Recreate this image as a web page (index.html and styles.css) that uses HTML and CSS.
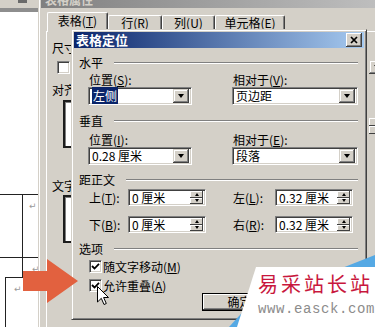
FILE: index.html
```html
<!DOCTYPE html>
<html lang="zh-CN">
<head>
    <meta charset="UTF-8">
    <title>表格定位</title>
    <link rel="stylesheet" href="styles.css">
</head>
<body>
<div class="screen">

    <!-- Word document behind the dialogs -->
    <div class="doc">
        <div class="doc-toolbar"><span class="doc-tool"></span></div>
        <div class="doc-ruler"></div>
        <div class="doc-table">
            <div class="doc-row row-a"><div class="doc-cell first"></div><div class="doc-cell"><span class="ret">↵</span></div></div>
            <div class="doc-row row-b"><div class="doc-cell first"></div><div class="doc-cell"><span class="ret">↵</span></div></div>
            <div class="doc-row row-c"><div class="doc-cell"><span class="ret">↵</span></div></div>
        </div>
    </div>

    <!-- 表格属性 (inactive) -->
    <div class="win props">
        <div class="props-title">表格属性</div>
        <div class="tabs">
            <div class="tab active">表格(<u>T</u>)</div>
            <div class="tab t-row">行(<u>R</u>)</div>
            <div class="tab t-col">列(<u>U</u>)</div>
            <div class="tab t-cell">单元格(<u>E</u>)</div>
        </div>
        <div class="tab-panel">
            <div class="panel-main">
                <div class="panel-label size">尺寸</div>
                <span class="check small-check"></span>
                <div class="panel-label">对齐</div>
                <div class="panel-box"></div>
                <div class="panel-label wrap">文字</div>
                <div class="panel-box second"></div>
            </div>
            <div class="panel-side">
                <span class="side-drop"><i class="tri-down"></i></span>
                <span class="side-spin"><i class="spin-up"></i><i class="spin-down"></i></span>
            </div>
        </div>
    </div>

    <!-- 表格定位 -->
    <div class="win locate">
        <div class="titlebar">
            <span class="title-text">表格定位</span>
            <span class="close-btn">
                <svg width="8" height="8" viewBox="0 0 8 8"><path d="M1 1L7 7M7 1L1 7" stroke="#000" stroke-width="1.7" fill="none"/></svg>
            </span>
        </div>
        <div class="dlg-body">
            <div class="group-head top"><span>水平</span><i class="etch"></i></div>
            <div class="field-grid">
                <label class="field-label">位置(<u>S</u>):</label>
                <label class="field-label">相对于(<u>V</u>):</label>
                <div class="combo"><span class="combo-text"><span class="hilite">左侧</span></span><span class="drop-btn"><i class="tri-down"></i></span></div>
                <div class="combo"><span class="combo-text">页边距</span><span class="drop-btn"><i class="tri-down"></i></span></div>
            </div>

            <div class="group-head"><span>垂直</span><i class="etch"></i></div>
            <div class="field-grid lower">
                <label class="field-label">位置(<u>I</u>):</label>
                <label class="field-label">相对于(<u>E</u>):</label>
                <div class="combo"><span class="combo-text">0.28 厘米</span><span class="drop-btn"><i class="tri-down"></i></span></div>
                <div class="combo"><span class="combo-text">段落</span><span class="drop-btn"><i class="tri-down"></i></span></div>
            </div>

            <div class="group-head dist"><span>距正文</span><i class="etch"></i></div>
            <div class="spin-row">
                <div class="spin-cell">
                    <label class="spin-label">上(<u>T</u>):</label>
                    <div class="spin-field"><span class="spin-text">0 厘米</span><span class="spin-btns"><i class="spin-up"></i><i class="spin-down"></i></span></div>
                </div>
                <div class="spin-cell">
                    <label class="spin-label wide">左(<u>L</u>):</label>
                    <div class="spin-field"><span class="spin-text">0.32 厘米</span><span class="spin-btns"><i class="spin-up"></i><i class="spin-down"></i></span></div>
                </div>
            </div>
            <div class="spin-row second">
                <div class="spin-cell">
                    <label class="spin-label">下(<u>B</u>):</label>
                    <div class="spin-field"><span class="spin-text">0 厘米</span><span class="spin-btns"><i class="spin-up"></i><i class="spin-down"></i></span></div>
                </div>
                <div class="spin-cell">
                    <label class="spin-label wide">右(<u>R</u>):</label>
                    <div class="spin-field"><span class="spin-text">0.32 厘米</span><span class="spin-btns"><i class="spin-up"></i><i class="spin-down"></i></span></div>
                </div>
            </div>

            <div class="group-head"><span>选项</span><i class="etch"></i></div>
            <div class="check-row">
                <span class="check"><svg width="9" height="9" viewBox="0 0 9 9"><path d="M1 4L3.5 6.5L8 1.8" stroke="#000" stroke-width="1.8" fill="none"/></svg></span>
                <span>随文字移动(<u>M</u>)</span>
            </div>
            <div class="check-row second">
                <span class="check"><svg width="9" height="9" viewBox="0 0 9 9"><path d="M1 4L3.5 6.5L8 1.8" stroke="#000" stroke-width="1.8" fill="none"/></svg></span>
                <span>允许重叠(<u>A</u>)</span>
            </div>

            <div class="btn-row">
                <button class="btn default">确定</button>
                <button class="btn"></button>
            </div>
        </div>
    </div>

    <!-- orange pointer arrow -->
    <svg class="pointer" width="62" height="50" viewBox="0 0 62 50">
        <polygon points="3,15 27,15 27,3 58,25 27,47 27,35 3,35" fill="#e2613f"/>
    </svg>

    <!-- mouse cursor -->
    <svg class="cursor" width="13" height="20" viewBox="0 0 13 20">
        <path d="M0.5 0.5V16L4.3 12.3L7 18.5L9.3 17.5L6.6 11.5H11.5Z" fill="#fff" stroke="#000" stroke-width="1"/>
    </svg>

    <!-- site watermark -->
    <div class="watermark">
        <svg class="wm-shape" width="175" height="79" viewBox="0 0 175 79">
            <polygon points="142,20 175,7 175,20" fill="#55a9e4"/>
            <polygon points="29,79 50,56 50,79" fill="#55a9e4"/>
            <polygon points="56,19 175,19 175,79 37,79" fill="#fff"/>
        </svg>
        <div class="wm-text">
            <div class="wm-name">易采站长站</div>
            <div class="wm-url">www.easck.com</div>
        </div>
    </div>

</div>
</body>
</html>
```

FILE: styles.css
```css
* {
    box-sizing: border-box;
    margin: 0;
    padding: 0;
}

body {
    font-family: "Noto Sans CJK SC", "Liberation Sans", sans-serif;
    font-size: 12px;
    color: #000;
    background-color: #d4d0c8;
    overflow: hidden;
}

u {
    text-decoration: underline;
}

.screen {
    position: relative;
    width: 375px;
    height: 327px;
    overflow: hidden;
    background-color: #d4d0c8;
}

/* Word document */
.doc {
    width: 38px;
    height: 327px;
    background-color: #fff;
}

.doc-toolbar {
    height: 8px;
    padding-left: 18px;
    background-color: #d4d0c8;
}

.doc-tool {
    display: block;
    width: 9px;
    height: 3px;
    background-color: #6a6a6a;
}

.doc-ruler {
    height: 4px;
    background-color: #8e8e8e;
}

.doc-table {
    margin-top: 182px;
}

.doc-row {
    display: flex;
    border-top: 1px solid #222;
}

.row-a {
    height: 63px;
}

.row-b {
    height: 20px;
}

.row-c {
    height: 60px;
    margin-left: 5px;
    border-left: 1px solid #222;
}

.doc-cell.first {
    flex: none;
    width: 23px;
    border-right: 1px solid #222;
}

.ret {
    display: block;
    padding: 7px 0 0 6px;
    color: #9a9a9a;
    font-family: "DejaVu Sans", sans-serif;
    font-size: 9px;
    line-height: 9px;
}

.row-b .ret {
    padding-left: 9px;
}

.row-c .ret {
    padding-left: 8px;
}

/* classic window frame */
.win {
    position: absolute;
    padding: 2px;
    background-color: #d4d0c8;
    border: 1px solid;
    border-color: #d4d0c8 #404040 #404040 #d4d0c8;
    box-shadow: inset 1px 1px #fff, inset -1px -1px #808080;
}

/* 表格属性 */
.props {
    left: 38px;
    top: -12px;
    width: 352px;
    height: 345px;
}

.props-title {
    height: 17px;
    padding-left: 4px;
    line-height: 17px;
    font-weight: bold;
    color: #d4d0c8;
    background: linear-gradient(to right, #808080, #c0c0c0);
}

.tabs {
    display: flex;
    align-items: flex-end;
    height: 19px;
    margin-top: 4px;
    padding-left: 6px;
}

.tab {
    height: 16px;
    line-height: 14px;
    text-align: center;
    border: 1px solid;
    border-bottom: none;
    border-color: #fff #404040 #fff #fff;
    border-radius: 2px 2px 0 0;
    box-shadow: inset -1px 0 #808080;
}

.tab.active {
    position: relative;
    z-index: 1;
    width: 61px;
    height: 20px;
    margin-bottom: -1px;
    line-height: 16px;
    background-color: #d4d0c8;
}

.t-row {
    width: 54px;
}

.t-col {
    width: 53px;
}

.t-cell {
    width: 70px;
}

.tab-panel {
    display: flex;
    width: 340px;
    height: 300px;
    margin-left: 5px;
    border: 1px solid;
    border-color: #fff #404040 #404040 #fff;
}

/* only the strip left of the inner dialog is ever seen */
.panel-main {
    width: 25px;
    overflow: hidden;
    padding: 9px 0 0 5px;
}

.panel-label {
    width: 40px;
    line-height: 13px;
    white-space: nowrap;
}

.small-check {
    margin: 7px 0 0 5px;
}

.small-check + .panel-label {
    margin-top: 9px;
}

.panel-box {
    width: 40px;
    height: 48px;
    margin: 4px 0 0 11px;
    background-color: #fff;
    border: 2px solid #1c1c1c;
    box-shadow: inset 1px 1px #808080;
}

.panel-label.wrap {
    margin-top: 31px;
}

.panel-box.second {
    margin-top: 3px;
}

.panel-side {
    display: flex;
    flex-direction: column;
    width: 16px;
    margin-left: auto;
    padding-top: 28px;
}

.side-drop {
    display: flex;
    align-items: center;
    justify-content: center;
    height: 14px;
    box-shadow: inset -1px -1px #404040, inset 1px 1px #d4d0c8, inset -2px -2px #808080, inset 2px 2px #fff;
}

.side-spin {
    display: flex;
    flex-direction: column;
    height: 16px;
    margin-top: 44px;
}

/* 表格定位 */
.locate {
    left: 71px;
    top: 29px;
    width: 296px;
    height: 291px;
    z-index: 2;
}

.titlebar {
    display: flex;
    align-items: center;
    justify-content: space-between;
    height: 16px;
    padding: 0 2px;
    background: linear-gradient(to right, #0a246a, #a6caf0);
}

.title-text {
    color: #fff;
    font-size: 13px;
    font-weight: bold;
    line-height: 16px;
}

.close-btn {
    display: flex;
    align-items: center;
    justify-content: center;
    width: 16px;
    height: 14px;
    background-color: #d4d0c8;
    box-shadow: inset -1px -1px #404040, inset 1px 1px #fff, inset -2px -2px #808080;
}

.dlg-body {
    padding: 8px 6px 0 5px;
}

.group-head {
    display: flex;
    align-items: center;
    height: 14px;
    margin-top: 9px;
    line-height: 14px;
}

.group-head.top {
    margin-top: 0;
}

.group-head.dist {
    margin-top: 8px;
}

.etch {
    flex: 1;
    height: 2px;
    margin-left: 11px;
    border-top: 1px solid #808080;
    border-bottom: 1px solid #fff;
}

.field-grid {
    display: grid;
    grid-template-columns: 104px 126px;
    grid-template-rows: 13px 18px;
    column-gap: 40px;
    row-gap: 1px;
    margin: 3px 0 0 9px;
}

.field-grid.lower {
    margin-top: 5px;
}

.field-label {
    padding-left: 1px;
    line-height: 13px;
}

.combo,
.spin-field {
    display: flex;
    align-items: center;
    padding: 2px;
    background-color: #fff;
    border: 1px solid;
    border-color: #808080 #fff #fff #808080;
    box-shadow: inset 1px 1px #404040, inset -1px -1px #d4d0c8;
}

.combo {
    height: 18px;
}

.combo-text {
    flex: 1;
    padding-left: 1px;
    line-height: 14px;
    white-space: nowrap;
}

.hilite {
    padding: 0 1px;
    color: #fff;
    background-color: #0a246a;
}

.drop-btn {
    display: flex;
    align-items: center;
    justify-content: center;
    width: 16px;
    height: 14px;
    background-color: #d4d0c8;
    box-shadow: inset -1px -1px #404040, inset 1px 1px #d4d0c8, inset -2px -2px #808080, inset 2px 2px #fff;
}

.tri-down {
    width: 0;
    height: 0;
    border-style: solid;
    border-width: 4px 3.5px 0;
    border-color: #000 transparent transparent;
}

.spin-row {
    display: flex;
    height: 17px;
    margin: 2px 0 0 9px;
}

.spin-row.second {
    margin-top: 10px;
}

.spin-cell {
    display: flex;
    align-items: center;
}

.spin-cell:first-child {
    width: 144px;
}

.spin-label {
    width: 40px;
    padding-left: 1px;
    line-height: 13px;
}

.spin-label.wide {
    width: 43px;
}

.spin-field {
    width: 78px;
    height: 17px;
}

.spin-text {
    flex: 1;
    padding-left: 1px;
    line-height: 13px;
    white-space: nowrap;
}

.spin-btns {
    display: flex;
    flex-direction: column;
    width: 13px;
    height: 13px;
}

.spin-up,
.spin-down {
    display: flex;
    flex: 1;
    align-items: center;
    justify-content: center;
    background-color: #d4d0c8;
    box-shadow: inset -1px -1px #404040, inset 1px 1px #fff;
}

.spin-up::after,
.spin-down::after {
    content: "";
    width: 0;
    height: 0;
    border-style: solid;
}

.spin-up::after {
    border-width: 0 2.5px 3px;
    border-color: transparent transparent #000;
}

.spin-down::after {
    border-width: 3px 2.5px 0;
    border-color: #000 transparent transparent;
}

.check-row {
    display: flex;
    align-items: center;
    gap: 1px;
    height: 13px;
    margin: 4px 0 0 10px;
    line-height: 13px;
}

.check-row.second {
    margin-top: 6px;
}

.check {
    display: flex;
    align-items: center;
    justify-content: center;
    flex: none;
    width: 13px;
    height: 13px;
    background-color: #fff;
    border: 1px solid;
    border-color: #808080 #fff #fff #808080;
    box-shadow: inset 1px 1px #404040, inset -1px -1px #d4d0c8;
}

.btn-row {
    display: flex;
    justify-content: flex-end;
    gap: 6px;
    margin-top: 1px;
}

.btn {
    width: 75px;
    height: 18px;
    font-family: inherit;
    font-size: 12px;
    line-height: 14px;
    color: #000;
    background-color: #d4d0c8;
    border: none;
    box-shadow: inset -1px -1px #404040, inset 1px 1px #fff, inset -2px -2px #808080;
}

.btn.default {
    border: 1px solid #000;
}

/* overlays */
.pointer {
    position: absolute;
    left: 20px;
    top: 256px;
    z-index: 3;
}

.cursor {
    position: absolute;
    left: 97px;
    top: 286px;
    z-index: 3;
}

.watermark {
    position: absolute;
    left: 200px;
    top: 248px;
    width: 175px;
    height: 79px;
    z-index: 4;
}

.wm-shape {
    position: absolute;
    left: 0;
    top: 0;
}

.wm-text {
    position: relative;
    padding: 25px 0 0 58px;
    white-space: nowrap;
}

.wm-name {
    color: #c8173d;
    font-size: 20px;
    line-height: 22px;
    letter-spacing: 3px;
}

.wm-url {
    margin-top: 7px;
    color: #8c8c8c;
    font-family: "Liberation Mono", monospace;
    font-size: 14px;
    line-height: 14px;
    letter-spacing: 0.6px;
}
```
